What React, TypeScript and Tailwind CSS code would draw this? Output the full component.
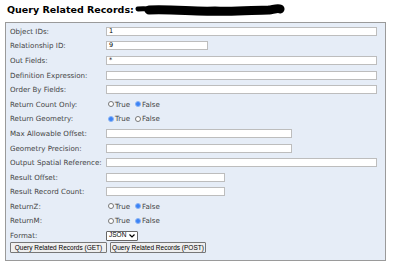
import React from "react"

const font = { fontFamily: "Verdana, 'DejaVu Sans', sans-serif" }

type Row =
  | { label: string; kind: "text"; w: string; value?: string }
  | { label: string; kind: "radio"; checked: "true" | "false" }

const rows: Row[] = [
  { label: "Object IDs:", kind: "text", w: "w-[271px]", value: "1" },
  { label: "Relationship ID:", kind: "text", w: "w-[102px]", value: "9" },
  { label: "Out Fields:", kind: "text", w: "w-[271px]", value: "*" },
  { label: "Definition Expression:", kind: "text", w: "w-[271px]" },
  { label: "Order By Fields:", kind: "text", w: "w-[271px]" },
  { label: "Return Count Only:", kind: "radio", checked: "false" },
  { label: "Return Geometry:", kind: "radio", checked: "true" },
  { label: "Max Allowable Offset:", kind: "text", w: "w-[186px]" },
  { label: "Geometry Precision:", kind: "text", w: "w-[186px]" },
  { label: "Output Spatial Reference:", kind: "text", w: "w-[271px]" },
  { label: "Result Offset:", kind: "text", w: "w-[119px]" },
  { label: "Result Record Count:", kind: "text", w: "w-[119px]" },
  { label: "ReturnZ:", kind: "radio", checked: "false" },
  { label: "ReturnM:", kind: "radio", checked: "false" },
]

function Radio({ on }: { on: boolean }) {
  return on ? (
    <span className="inline-block w-[6px] h-[6px] rounded-full bg-[#3b82f6] border border-[#8ab4f5]" />
  ) : (
    <span className="inline-block w-[6px] h-[6px] rounded-full bg-white border border-[#777]" />
  )
}

export default function App() {
  return (
    <div className="w-[400px] h-[267px] bg-white text-[#333] overflow-hidden" style={font}>
      {/* Title */}
      <div className="flex items-center h-[20px] pl-[7px]">
        <h2 className="text-[9.5px] font-bold text-black leading-none whitespace-nowrap">Query Related Records:</h2>
        <svg width="150" height="14" viewBox="0 0 150 14" className="ml-[1px]">
          <path d="M3 6 C10 5 16 6 22 7" stroke="#000" strokeWidth="5" strokeLinecap="round" fill="none" />
          <path d="M14 7 C40 6 60 9 80 8 C100 9 120 7 134 7 C140 6 143 5 145 6" stroke="#000" strokeWidth="9" strokeLinecap="round" fill="none" />
        </svg>
      </div>

      {/* Panel */}
      <div className="ml-[5px] mt-[2px] w-[381px] h-[239px] bg-[#e6edf7] border border-[#9a9a9a] pl-[4px] pt-[1px]">
        {rows.map((r) => (
          <div key={r.label} className="flex items-center h-[14.6px]">
            <div className="w-[96px] shrink-0 whitespace-nowrap text-[7.1px] leading-none text-[#444]">{r.label}</div>
            {r.kind === "text" ? (
              <div className={`${r.w} h-[9px] bg-white border border-[#bdbdbd] text-[6.5px] leading-[7px] pl-[2px] text-black`}>
                {r.value}
              </div>
            ) : (
              <div className="flex items-center text-[7.1px] leading-none text-[#444] pl-[2px]">
                <Radio on={r.checked === "true"} />
                <span className="ml-[1px]">True</span>
                <span className="ml-[5px]" />
                <Radio on={r.checked === "false"} />
                <span className="ml-[1px]">False</span>
              </div>
            )}
          </div>
        ))}
        <div className="flex items-center h-[14.6px]">
          <div className="w-[96px] shrink-0 text-[7.1px] leading-none text-[#444]">Format:</div>
          <div
            className="flex items-center h-[10px] px-[2px] bg-white border border-[#666] rounded-[1px] text-[6.5px] leading-none text-black"
            style={{ fontFamily: "'Liberation Sans', Arial, sans-serif" }}
          >
            JSON
            <svg width="6" height="4" viewBox="0 0 6 4" className="ml-[3px]">
              <path d="M0.5 0.5 L3 3 L5.5 0.5" stroke="#000" strokeWidth="1.2" fill="none" />
            </svg>
          </div>
        </div>
        <div
          className="flex items-center gap-[3px] h-[12px] mt-[-1px]"
          style={{ fontFamily: "'Liberation Sans', Arial, sans-serif" }}
        >
          <button className="h-[11px] w-[97px] bg-[#efefef] border border-[#777] rounded-[1px] text-[6.5px] leading-none text-black whitespace-nowrap">
            Query Related Records (GET)
          </button>
          <button className="h-[11px] w-[96px] bg-[#efefef] border border-[#777] rounded-[1px] text-[6.5px] leading-none text-black whitespace-nowrap">
            Query Related Records (POST)
          </button>
        </div>
      </div>
    </div>
  )
}
